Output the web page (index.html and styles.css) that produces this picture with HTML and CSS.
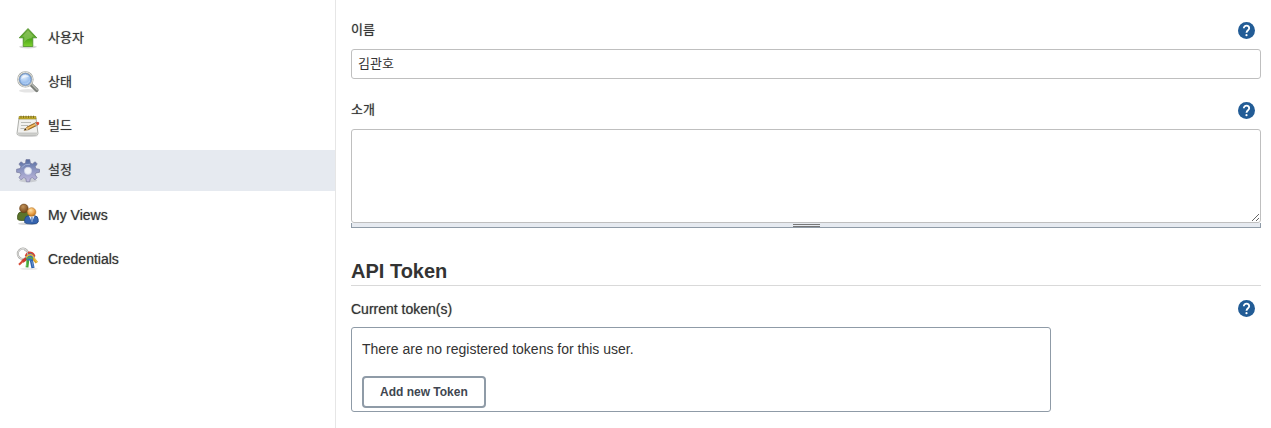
FILE: index.html
```html
<!DOCTYPE html>
<html lang="ko">
<head>
<meta charset="utf-8">
<title>설정</title>
<link rel="stylesheet" href="styles.css">
</head>
<body>
<div class="page-body">
	<nav class="side-panel">
		<a class="task" href="#up">
			<svg class="task-icon" viewBox="0 0 24 24">
				<defs><linearGradient id="green" x1="0" y1="0" x2="0" y2="1"><stop offset="0" stop-color="#6ca63a"/><stop offset=".6" stop-color="#4fa81c"/><stop offset="1" stop-color="#7fd32f"/></linearGradient></defs>
				<ellipse cx="12" cy="19.8" rx="9" ry="1.6" fill="#000" opacity=".16"/>
				<path d="M12 1.5L20.8 10.8H16.8V19.5H7.2V10.8H3.2Z" fill="url(#green)" stroke="#4d9129" stroke-width=".8" stroke-linejoin="round"/>
				<path d="M12 3.2L18 9.8H15.8V11.3Q11 11.3 8.2 15.3V9.8H6Z" fill="#b7df8d" opacity=".4"/>
			</svg>
			<span class="ko">사용자</span>
		</a>
		<a class="task" href="#status">
			<svg class="task-icon" viewBox="0 0 24 24">
				<defs><radialGradient id="lens" cx=".4" cy=".3" r=".7"><stop offset="0" stop-color="#e2effd"/><stop offset=".6" stop-color="#9cc0ee"/><stop offset="1" stop-color="#c4dcf8"/></radialGradient></defs>
				<ellipse cx="12" cy="19.7" rx="9" ry="1.8" fill="#000" opacity=".1"/>
				<path d="M15 13.5L20.7 19.2" stroke="#7b7e79" stroke-width="3.8" stroke-linecap="round"/>
				<path d="M15.5 13L21.2 18.7" stroke="#b2b5b0" stroke-width="1.4" stroke-linecap="round"/>
				<circle cx="9.4" cy="8.4" r="7.1" fill="url(#lens)" stroke="#a5a8a3" stroke-width="2.2"/>
				<circle cx="9.4" cy="8.4" r="7.2" fill="none" stroke="#e1e2df"/>
				<circle cx="9.4" cy="8.4" r="5.7" fill="none" stroke="#6a91c8"/>
				<path d="M5.2 8.2Q5.7 4.7 9.3 3.9Q12 3.9 13 5.9Q8 5.7 5.2 8.2Z" fill="#fff" opacity=".55"/>
			</svg>
			<span class="ko">상태</span>
		</a>
		<a class="task" href="#builds">
			<svg class="task-icon" viewBox="0 0 24 24">
				<ellipse cx="12" cy="20.8" rx="10" ry="1.3" fill="#000" opacity=".16"/>
				<path d="M3 3H20L22 18.5Q22 20 20.5 20H2.5Q1 20 1 18.5Z" fill="#f1f1ef" stroke="#9a9c97" stroke-width=".8"/>
				<path d="M2 17.5H21V19H2Z" fill="#c8c9c6"/>
				<path d="M3 1.5H20V4H3Z" fill="#c6b12e" stroke="#8f7d18" stroke-width=".6"/>
				<path d="M5 .7V3M7.5 .7V3M10 .7V3M12.5 .7V3M15 .7V3M17.5 .7V3" stroke="#766615" stroke-width=".8"/>
				<path d="M5 7.5H15M5 10.5H12M4.5 13.5H9" stroke="#b9bbb6"/>
				<path d="M8.2 15.2L11 12L20 7.6L21.3 10.2L12.3 14.7Z" fill="#d99a3a" stroke="#7d541a" stroke-width=".8"/>
				<path d="M11.6 13.3L19.5 9.3" stroke="#ffd688" stroke-width=".8"/>
				<path d="M18.6 8.2L19.9 7.6L21.2 10.2L19.9 10.9Z" fill="#b5bab9"/>
				<path d="M20 7.5L22 6.7Q24 7.5 23 9.4L21.3 10.2Z" fill="#df4d34"/>
				<path d="M8.2 15.2L11 12L12.3 14.7Z" fill="#e5c58b"/>
				<path d="M8.2 15.2L9.6 13.5L10.3 14.8Z" fill="#222"/>
			</svg>
			<span class="ko">빌드</span>
		</a>
		<a class="task active" href="#configure">
			<svg class="task-icon" viewBox="0 0 24 24">
				<defs><linearGradient id="gear" x1="0" y1="0" x2="0" y2="1"><stop offset="0" stop-color="#536ca1"/><stop offset=".5" stop-color="#9199c4"/><stop offset="1" stop-color="#c1b9dc"/></linearGradient></defs>
				<ellipse cx="12" cy="21.5" rx="9" ry="1.7" fill="#000" opacity=".12"/>
				<path fill-rule="evenodd" d="M10 .6H13.8L14.4 4.1L16.3 4.9L19.2 2.8L21.2 4.9L19.2 7.7L20 9.7L23.5 10.3V13.3L20 13.9L19.2 15.8L21.2 18.7L19 20.7L16.3 18.8L14.3 19.6L13.7 22.8H10.4L9.8 19.6L7.8 18.8L5 20.7L2.9 18.6L4.9 15.8L4.1 13.8L.6 13.3V10.2L4.1 9.6L4.9 7.7L2.9 4.9L5 2.8L7.8 4.8L9.5 4.1ZM12 8.6A3.2 3.2 0 1 0 12 15A3.2 3.2 0 1 0 12 8.6Z" fill="url(#gear)" stroke="#777a9e" stroke-width=".7"/>
				<circle cx="12" cy="11.8" r="3.6" fill="#eef1f7" stroke="#cdd3e9" stroke-width=".8"/>
				<path d="M5.6 8.6Q9 4.4 14 5.3" fill="none" stroke="#a7b8db" stroke-width=".8"/>
			</svg>
			<span class="ko">설정</span>
		</a>
		<a class="task" href="#views">
			<svg class="task-icon" viewBox="0 0 24 24">
				<defs>
					<radialGradient id="tan" cx=".4" cy=".3" r=".7"><stop offset="0" stop-color="#ffe2a5"/><stop offset=".6" stop-color="#eca44c"/><stop offset="1" stop-color="#bd731e"/></radialGradient>
					<radialGradient id="brown" cx=".4" cy=".3" r=".7"><stop offset="0" stop-color="#c39359"/><stop offset="1" stop-color="#75461a"/></radialGradient>
				</defs>
				<ellipse cx="12" cy="20.7" rx="10" ry="1.4" fill="#000" opacity=".16"/>
				<path d="M1.6 16V12.6Q2 9 6 8.7H11Q14 9.2 14 13V17.4H5Q1.6 17.4 1.6 16Z" fill="#5b742a" stroke="#3f531b" stroke-width=".8"/>
				<circle cx="7.9" cy="5.4" r="4.3" fill="url(#brown)" stroke="#6a411a" stroke-width=".6"/>
				<path d="M8.7 19.6V16.5Q9 13 12.5 12.7H18.5Q22.2 13 22.2 16.5V19Q21.5 21 16 21Q9.6 21 8.7 19.6Z" fill="#3563af" stroke="#224780" stroke-width=".8"/>
				<path d="M13 13H18.5L16 19Z" fill="#eef3fa"/>
				<path d="M15.2 14H16.6L16.9 17.5L16 19L15 17.5Z" fill="#7292c5"/>
				<circle cx="15.6" cy="9" r="4.3" fill="url(#tan)" stroke="#b97523" stroke-width=".6"/>
			</svg>
			<span>My Views</span>
		</a>
		<a class="task" href="#credentials">
			<svg class="task-icon" viewBox="0 0 24 24">
				<ellipse cx="13" cy="21.8" rx="9" ry="1.2" fill="#000" opacity=".08"/>
				<circle cx="7" cy="6.8" r="5.2" fill="none" stroke="#a3a3a0" stroke-width="2"/>
				<circle cx="7" cy="6.8" r="5.2" fill="none" stroke="#ececea" stroke-width=".9"/>
				<path d="M10.5 11.5L6.4 14.5" stroke="#c93a2c" stroke-width="3.4"/>
				<path d="M6.8 14L3 17.8" stroke="#d54a36" stroke-width="2"/>
				<path d="M16.5 10.5L20.8 15.6" stroke="#d9a225" stroke-width="3"/>
				<path d="M18 11.2L21.4 15.2" stroke="#f4d25c"/>
				<path d="M12 12L11 20.4" stroke="#44a439" stroke-width="2.8"/>
				<path d="M10.6 13.4V19.4" stroke="#80d073" stroke-width=".8"/>
				<path d="M15 11.5L17 21" stroke="#2c62b0" stroke-width="3.2"/>
				<path d="M15.8 14L17.2 20" stroke="#8bacd9" stroke-width=".7"/>
				<path d="M9.5 9.5Q10 5 14.5 5.5Q18.6 6.1 18.8 10L15 13.5H11Z" fill="#3d72ba"/>
				<path d="M9.6 9.3Q11 4.5 15 5.5Q18 6.3 18.6 9.5" fill="none" stroke="#d84431" stroke-width="1.7"/>
				<path d="M10 10.5Q12.4 7 15.5 7.9Q17.5 8.8 18 11.1" fill="none" stroke="#e6bd37" stroke-width="1.4"/>
				<path d="M10.5 12Q13.5 9.2 16.7 11.9" fill="none" stroke="#56ae47" stroke-width="1.5"/>
				<path d="M8 3Q12 4 12 8" fill="none" stroke="#bcbcb9"/>
			</svg>
			<span>Credentials</span>
		</a>
	</nav>
	<main class="main-panel">
		<form>
			<div class="form-item">
				<div class="form-head">
					<label class="ko" for="name">이름</label>
					<a class="help" href="#help-name" aria-label="도움말"><svg viewBox="0 0 17 17"><circle cx="8.5" cy="8.5" r="8.5" fill="#225c96"/><path d="M5.8 6.3A2.7 2.6 0 0 1 11.2 6.3C11.2 8.2 8.5 8.3 8.5 10.8" fill="none" stroke="#fff" stroke-width="1.8"/><circle cx="8.5" cy="13.2" r="1.1" fill="#fff"/></svg></a>
				</div>
				<input class="setting-input" id="name" type="text" value="김관호">
			</div>
			<div class="form-item">
				<div class="form-head">
					<label class="ko" for="description">소개</label>
					<a class="help" href="#help-description" aria-label="도움말"><svg viewBox="0 0 17 17"><circle cx="8.5" cy="8.5" r="8.5" fill="#225c96"/><path d="M5.8 6.3A2.7 2.6 0 0 1 11.2 6.3C11.2 8.2 8.5 8.3 8.5 10.8" fill="none" stroke="#fff" stroke-width="1.8"/><circle cx="8.5" cy="13.2" r="1.1" fill="#fff"/></svg></a>
				</div>
				<textarea class="setting-input" id="description" rows="5"></textarea>
				<div class="textarea-handle"><span></span></div>
			</div>
			<h2>API Token</h2>
			<div class="form-item">
				<div class="form-head">
					<div class="form-label">Current token(s)</div>
					<a class="help" href="#help-token" aria-label="도움말"><svg viewBox="0 0 17 17"><circle cx="8.5" cy="8.5" r="8.5" fill="#225c96"/><path d="M5.8 6.3A2.7 2.6 0 0 1 11.2 6.3C11.2 8.2 8.5 8.3 8.5 10.8" fill="none" stroke="#fff" stroke-width="1.8"/><circle cx="8.5" cy="13.2" r="1.1" fill="#fff"/></svg></a>
				</div>
				<div class="token-list">
					<p>There are no registered tokens for this user.</p>
					<button type="button">Add new Token</button>
				</div>
			</div>
		</form>
	</main>
</div>
</body>
</html>
```
FILE: styles.css
```css
*{
	box-sizing:border-box;
}
body{
	margin:0;
	background-color:#fff;
	color:#333;
	font-family:"Liberation Sans","Noto Sans CJK KR",sans-serif;
	font-size:14px;
	line-height:16px;
}
.page-body{
	display:flex;
	min-height:100vh;
}
.side-panel{
	display:flex;
	flex-direction:column;
	gap:3px;
	flex:0 0 336px;
	padding-top:18px;
	border-right:1px solid #e6e6e6;
}
.task{
	display:flex;
	align-items:center;
	gap:8px;
	height:41px;
	padding:0 16px;
	color:#333;
	text-decoration:none;
	text-shadow:0 0 1px #888;
}
.task.active{
	background-color:#e6eaf0;
}
.task-icon{
	width:24px;
	height:24px;
}
.ko{
	padding-bottom:2px;
	font-size:13px;
}
.main-panel{
	flex:1;
	min-width:0;
	padding:22px 10px 16px 15px;
}
.form-item{
	margin-bottom:23px;
}
.form-item:last-child{
	margin-bottom:0;
}
.form-head{
	display:flex;
	align-items:center;
	justify-content:space-between;
	height:17px;
	margin-bottom:10px;
	padding-right:6px;
	text-shadow:0 0 1px #888;
}
.help,
.help svg{
	display:block;
	width:17px;
	height:17px;
}
.setting-input{
	display:block;
	width:100%;
	padding:2px 6px 6px;
	border:1px solid #bfbfbf;
	border-radius:3px;
	background-color:#fff;
	color:#333;
	font-family:inherit;
	font-size:13px;
}
input.setting-input{
	height:30px;
}
textarea.setting-input{
	height:94px;
	resize:vertical;
}
.textarea-handle{
	display:flex;
	justify-content:center;
	height:5px;
	border:1px solid #8f9ba7;
	border-top:0;
	background-color:#e6eaf0;
}
.textarea-handle span{
	width:27px;
	height:3px;
	margin-top:1px;
	border-top:1px solid #777;
	border-bottom:1px solid #777;
}
h2{
	margin:31px 0 14px;
	padding-bottom:2px;
	border-bottom:1px solid #d9d9d9;
	font-size:20px;
	line-height:24px;
}
.token-list{
	max-width:700px;
	padding:13px 10px 3px;
	border:1px solid #8f9ba7;
	border-radius:3px;
}
.token-list p{
	margin:0 0 19px;
}
.token-list button{
	display:block;
	height:32px;
	padding:0 16px;
	border:2px solid #8f9ba7;
	border-radius:4px;
	background-color:#fff;
	color:#404650;
	font-family:inherit;
	font-size:12px;
	font-weight:bold;
}
```
